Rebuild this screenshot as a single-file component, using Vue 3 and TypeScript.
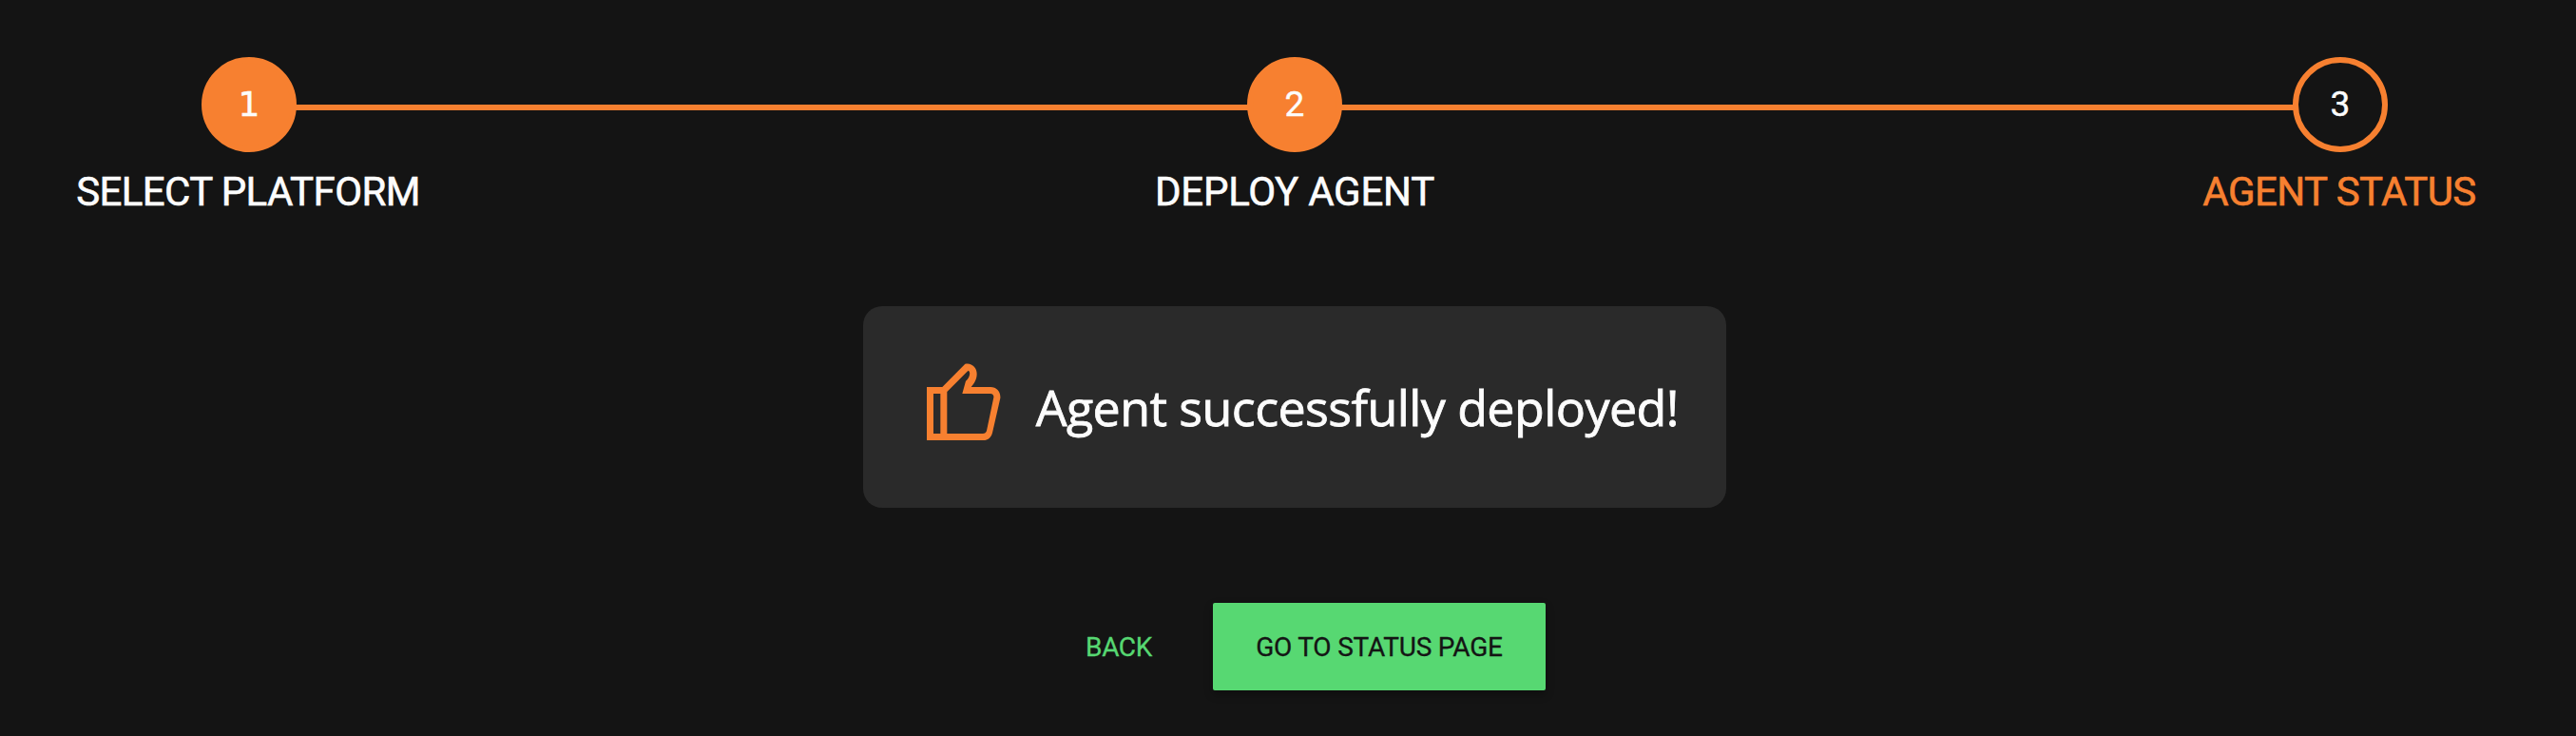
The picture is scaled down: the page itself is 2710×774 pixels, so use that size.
<script setup lang="ts">
interface Step {
  id: number
  label: string
  state: 'done' | 'active'
  key: string
}

const steps: Step[] = [
  { id: 1, label: 'SELECT PLATFORM', state: 'done', key: 'platform' },
  { id: 2, label: 'DEPLOY AGENT', state: 'done', key: 'deploy' },
  { id: 3, label: 'AGENT STATUS', state: 'active', key: 'status' },
]
</script>

<template>
  <main class="page">
    <div class="stepper">
      <template v-for="(step, i) in steps" :key="step.id">
        <span v-if="i > 0" class="line"></span>
        <div class="step" :class="[step.state, step.key]">
          <span class="circle">{{ step.id }}</span>
          <span class="label">{{ step.label }}</span>
        </div>
      </template>
    </div>

    <section class="card">
      <svg class="thumb" viewBox="254 216 233 243" aria-hidden="true">
        <path
          fill-rule="evenodd"
          d="M254 291H303L375 218C396 213 412 230 412 249C412 267 404 280 394 291H455C475 291 488 307 486 326L462 431C459 449 448 459 432 459H254ZM275 312V438H297V312ZM318 306V438H431C437 438 441 435 443 429L465 324C466 317 462 312 455 312H366L377 272C389 263 394 244 385 239Z"
        />
      </svg>
      <span class="message">Agent successfully deployed!</span>
    </section>

    <div class="actions">
      <button class="btn back" type="button">BACK</button>
      <button class="btn go" type="button">GO TO STATUS PAGE</button>
    </div>
  </main>
</template>

<style>
body {
  background: #141414;
}
</style>

<style scoped>
.page {
  box-sizing: border-box;
  width: 100%;
  height: 774px;
  padding: 60px 0 0 14px;
  display: flex;
  flex-direction: column;
  align-items: center;
  background: #141414;
  color: #fcfcfc;
  font-family: Roboto, "Noto Sans", sans-serif;
}
.stepper {
  box-sizing: border-box;
  width: 100%;
  height: 262px;
  padding: 0 198px;
  display: flex;
  align-items: flex-start;
}
.line {
  flex: 1;
  height: 6px;
  margin: 50px -1px 0;
  background: #f78030;
}
.step {
  width: 100px;
  display: flex;
  flex-direction: column;
  align-items: center;
}
.circle {
  box-sizing: border-box;
  width: 100px;
  height: 100px;
  border: 6px solid #f78030;
  border-radius: 50%;
  display: flex;
  align-items: center;
  justify-content: center;
  font-size: 37px;
  line-height: 44px;
  -webkit-text-stroke: 0.4px currentColor;
}
.done .circle {
  background: #f78030;
}
.platform .circle {
  font-family: "DejaVu Sans", sans-serif;
  font-size: 36px;
}
.label {
  margin-top: 17px;
  font-size: 42px;
  line-height: 50px;
  white-space: nowrap;
  -webkit-text-stroke: 0.6px currentColor;
}
.platform .label {
  margin-right: 2px;
  letter-spacing: -0.6px;
}
.deploy .label {
  letter-spacing: -0.24px;
}
.status .label {
  margin-right: 2px;
  letter-spacing: -0.55px;
  color: #f78030;
}
.card {
  box-sizing: border-box;
  width: 908px;
  height: 212px;
  padding-left: 67px;
  display: flex;
  align-items: center;
  border-radius: 20px;
  background: #2a2a2a;
}
.thumb {
  width: 77.67px;
  height: 81px;
  margin-bottom: 11px;
  fill: #f78030;
}
.message {
  margin-left: 37px;
  font-family: "Open Sans", "Noto Sans", sans-serif;
  font-size: 52px;
  line-height: 72px;
  letter-spacing: -0.59px;
  white-space: nowrap;
  -webkit-text-stroke: 0.8px currentColor;
}
.actions {
  margin-top: 100px;
  display: flex;
  gap: 18px;
}
.btn {
  height: 92px;
  padding: 1px 0 0;
  border: 0;
  border-radius: 2px;
  font: 400 28px/34px Roboto, "Noto Sans", sans-serif;
  white-space: nowrap;
  -webkit-text-stroke: 0.3px currentColor;
}
.back {
  width: 160px;
  padding-right: 2px;
  background: transparent;
  color: #57d872;
  letter-spacing: -0.4px;
}
.go {
  width: 350px;
  background: #57d872;
  color: #141414;
  letter-spacing: -0.22px;
  box-shadow: 0 4px 10px rgba(0, 0, 0, 0.3);
}
</style>
